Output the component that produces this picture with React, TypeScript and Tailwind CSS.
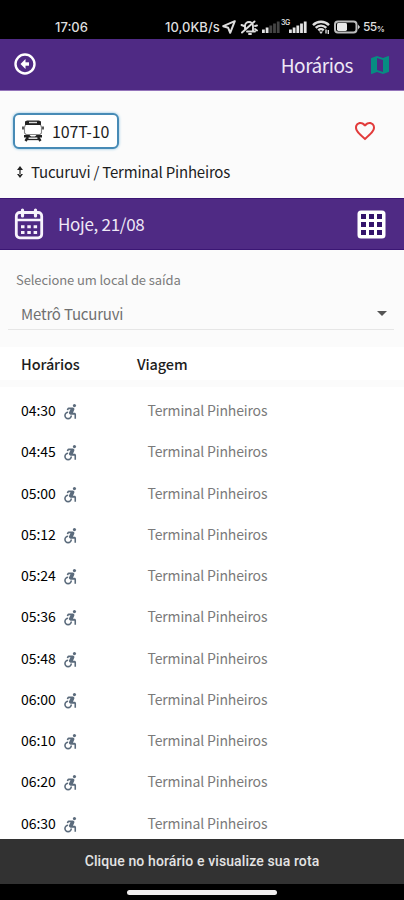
import React from "react";
import { MdMap, MdFavoriteBorder, MdArrowDropDown, MdAccessibleForward } from "react-icons/md";

const times = [
  "04:30",
  "04:45",
  "05:00",
  "05:12",
  "05:24",
  "05:36",
  "05:48",
  "06:00",
  "06:10",
  "06:20",
  "06:30",
];

const Signal: React.FC<{ bars: number }> = ({ bars }) => (
  <svg className="w-[18px] h-3" viewBox="0 0 18 12">
    {[0, 1, 2, 3, 4].map((i) => (
      <rect
        key={i}
        x={i * 3.7}
        y={8.5 - i * 2}
        width="2.8"
        height={3.5 + i * 2}
        fill={i < bars ? "#e4e4e4" : "#444"}
      />
    ))}
  </svg>
);

const StatusBar: React.FC = () => (
  <div className="flex h-[39px] shrink-0 items-center bg-black pt-[15px] pl-[55px] font-['Inter',sans-serif] text-[13px] leading-6 text-[#dedede]">
    <span className="w-[110px] font-medium">17:06</span>
    <span className="w-[57px] whitespace-nowrap font-medium">10,0KB/s</span>
    <svg className="w-[14px] h-[14px]" viewBox="0 0 14 14" fill="none" stroke="#dedede" strokeWidth="2" strokeLinejoin="round">
      <path d="M12.8 1.2 1.2 6.2 6.2 7.8 8.2 12.8Z" />
    </svg>
    <svg className="ml-1 w-[18px] h-[15px]" viewBox="0 0 18 15" fill="none" stroke="#dedede" strokeWidth="1.9" strokeLinecap="round">
      <path d="M5 8.5V6a4 4 0 0 1 8 0v5M7 11.5h8M9 14h2M2 12.5 14.5 1.5M1.5 5l2.500 1M15 6l2-.5M15 9l2 1.500" />
    </svg>
    <span className="ml-1 flex">
      <Signal bars={2} />
    </span>
    <span className="ml-[1px] w-[8px] self-start pt-[4px] text-[7px] font-semibold leading-[8px] tracking-[-0.5px]">3G</span>
    <Signal bars={5} />
    <svg className="ml-[5px] w-[18px] h-[14px]" viewBox="0 0 18 14" fill="none" stroke="#dedede" strokeWidth="2.4">
      <path d="M1 5.1a11.3 11.3 0 0 1 16 0M3.7 7.8a7.5 7.5 0 0 1 10.6 0M6.3 10.3a3.8 3.8 0 0 1 5.4 0" />
      <path d="m9 14-2-2.4h4Z" fill="#dedede" stroke="none" />
      <path d="M14 9.5v4M16.3 10v4" strokeWidth="1.4" />
    </svg>
    <svg className="ml-1 w-[26px] h-[14px]" viewBox="0 0 26 14">
      <rect x="1" y="1.5" width="21.5" height="11" rx="3" fill="none" stroke="#bdbdbd" strokeWidth="2" />
      <rect x="3" y="3" width="10" height="8" rx="1.4" fill="#e9e9e9" />
      <path d="M24 4.5 26 7l-2 2.5Z" fill="#cfcfcf" />
    </svg>
    <span className="ml-[3px] text-[12px] font-medium tracking-[-0.6px]">55</span>
    <span className="pt-[3px] text-[8px] font-semibold">%</span>
  </div>
);

const BusIcon: React.FC = () => (
  <svg className="w-[22px] h-[22px]" viewBox="0 0 22 22" fill="none" stroke="#222" strokeWidth="1.1">
    <path d="M3 1.5 5 .5h12l2 1V5H3Z" fill="#222" stroke="none" />
    <path d="M7 2.500h8" stroke="#ddd" strokeWidth="1.4" />
    <path d="M3.500 5 2.500 7v6L4 14.500h14l1.500-1.500V7l-1-2" stroke="#888" />
    <path d="M1 6.500v3M21 6.500v3" strokeWidth="1.500" />
    <path d="M2 15h5.500L9 16.500h4l1.500-1.500H20v2.500H2Z" fill="#222" stroke="none" />
    <path d="m6 17-2.500 4M16 17l2.500 4" strokeWidth="2.400" />
    <path d="M5 19.500h12" strokeWidth="1.300" />
  </svg>
);

const CalendarIcon: React.FC = () => (
  <svg className="w-[30px] h-[32px]" viewBox="0 0 30 32" fill="none" stroke="#f7f3fc" strokeWidth="2.8">
    <rect x="2.3" y="4.5" width="25.4" height="25.3" rx="3.5" />
    <path d="M2.3 12h25.4" strokeWidth="2.5" />
    <path d="M8.5 2v6M21.5 2v6" strokeWidth="3.2" strokeLinecap="round" />
    <path d="M7 18.7h3.5M13.3 18.7h3.5M19.6 18.7h3.5M7 24.5h3.5M13.3 24.5h3.5M19.6 24.5h3.5" strokeWidth="3" />
  </svg>
);

const GridIcon: React.FC = () => (
  <svg className="w-[29px] h-[29px]" viewBox="0 0 29 29">
    <rect x="0.5" y="0.5" width="28" height="28" rx="3.5" fill="#fff" />
    {[4, 12, 20].map((y) =>
      [4, 12, 20].map((x) => <rect key={`${x}-${y}`} x={x} y={y} width="5" height="5" fill="#34146b" />)
    )}
  </svg>
);

export default function App() {
  return (
    <div className="flex h-[900px] w-[404px] flex-col overflow-hidden bg-white font-['Noto_Sans_CJK_SC',sans-serif] text-[#1d1d1d]">
      <StatusBar />

      <header className="flex h-[52px] shrink-0 items-center border-b border-[#9474ba] bg-[#4f2a84] pl-[14px] pr-3">
        <svg className="mb-[2px] w-[22px] h-[22px]" viewBox="0 0 22 22" fill="none" stroke="#fff">
          <circle cx="11" cy="11" r="9.5" strokeWidth="2.4" />
          <path d="M15 11H9" strokeWidth="3.4" />
          <path d="m11.5 6-5 5 5 5Z" fill="#fff" stroke="none" />
        </svg>
        <h1 className="ml-auto text-[19px] leading-7 tracking-[-0.45px] text-[#eee8f6]">Horários</h1>
        <MdMap className="ml-[15px] size-6 text-[#078c82]" />
      </header>

      <section className="h-[107px] shrink-0 bg-[#fbfbfb] pl-[13px] pr-[27px] pt-[22px]">
        <div className="flex items-center justify-between">
          <div className="flex h-9 w-[106px] items-center gap-2 rounded-[6px] border-2 border-[#478bb6] bg-white pl-[7px] shadow-[0_0_3px_#82bfe0]">
            <BusIcon />
            <span className="text-[16px] leading-6 tracking-[-0.15px]">107T-10</span>
          </div>
          <MdFavoriteBorder className="size-6 text-[#e23b3b]" />
        </div>
        <div className="mt-[11px] flex items-center text-[15px] leading-6 tracking-[-0.2px]">
          <svg className="ml-1 mr-2 w-[6px] h-[12px]" viewBox="0 0 6 12" fill="#222">
            <path d="m3 0 3 4H0ZM3 12l3-4H0ZM2.4 3h1.2v6H2.4Z" />
          </svg>
          <span>Tucuruvi / Terminal Pinheiros</span>
        </div>
      </section>

      <section className="flex h-[52px] shrink-0 items-center border-y border-[#3b1674] bg-[#4f2a84] pl-[14px] pr-[18px]">
        <CalendarIcon />
        <span className="ml-[14px] pb-[1px] text-[17px] leading-7 tracking-[-0.3px] text-[#eee8f6]">Hoje, 21/08</span>
        <span className="ml-auto">
          <GridIcon />
        </span>
      </section>

      <section className="h-[97px] shrink-0 bg-[#fbfbfb] px-2 pt-5">
        <p className="pl-2 text-[13px] leading-5 tracking-[-0.1px] text-[#7c7c7c]">Selecione um local de saída</p>
        <div className="mt-[10px] mr-[2px] flex h-[30px] items-center justify-between border-b border-[#e6e6e6] pl-[13px]">
          <span className="pb-[2px] text-[15px] leading-6 tracking-[-0.2px] text-[#707070]">Metrô Tucuruvi</span>
          <MdArrowDropDown className="mb-[3px] size-6 text-[#555]" />
        </div>
      </section>

      <div className="flex h-[40px] shrink-0 items-center border-b-[7px] border-[#fbfbfb] pl-[21px] text-[14.5px] font-medium leading-6 tracking-[-0.1px]">
        <span className="w-[116px]">Horários</span>
        <span>Viagem</span>
      </div>

      <ul className="min-h-0 flex-1 overflow-hidden pt-[3px]">
        {times.map((time) => (
          <li key={time} className="flex h-[41.25px] items-center pl-[21px]">
            <span className="w-[40px] text-[14px] tracking-[-0.05px] text-black">{time}</span>
            <MdAccessibleForward className="mt-[2px] size-[19px] text-[#5b6b7c]" />
            <span className="ml-auto w-[256.5px] text-[14px] tracking-[-0.15px] text-[#7a7a7a]">Terminal Pinheiros</span>
          </li>
        ))}
      </ul>

      <footer className="shrink-0">
        <div className="h-[45px] bg-[#323232] text-center font-['Roboto',sans-serif] text-[14px] font-medium leading-[45px] tracking-[0.12px] text-[#e3e3e3]">
          Clique no horário e visualize sua rota
        </div>
        <div className="flex h-4 justify-center bg-black pt-[6px]">
          <div className="h-[5px] w-[150px] rounded-full bg-[#f0eeee]" />
        </div>
      </footer>
    </div>
  );
}
